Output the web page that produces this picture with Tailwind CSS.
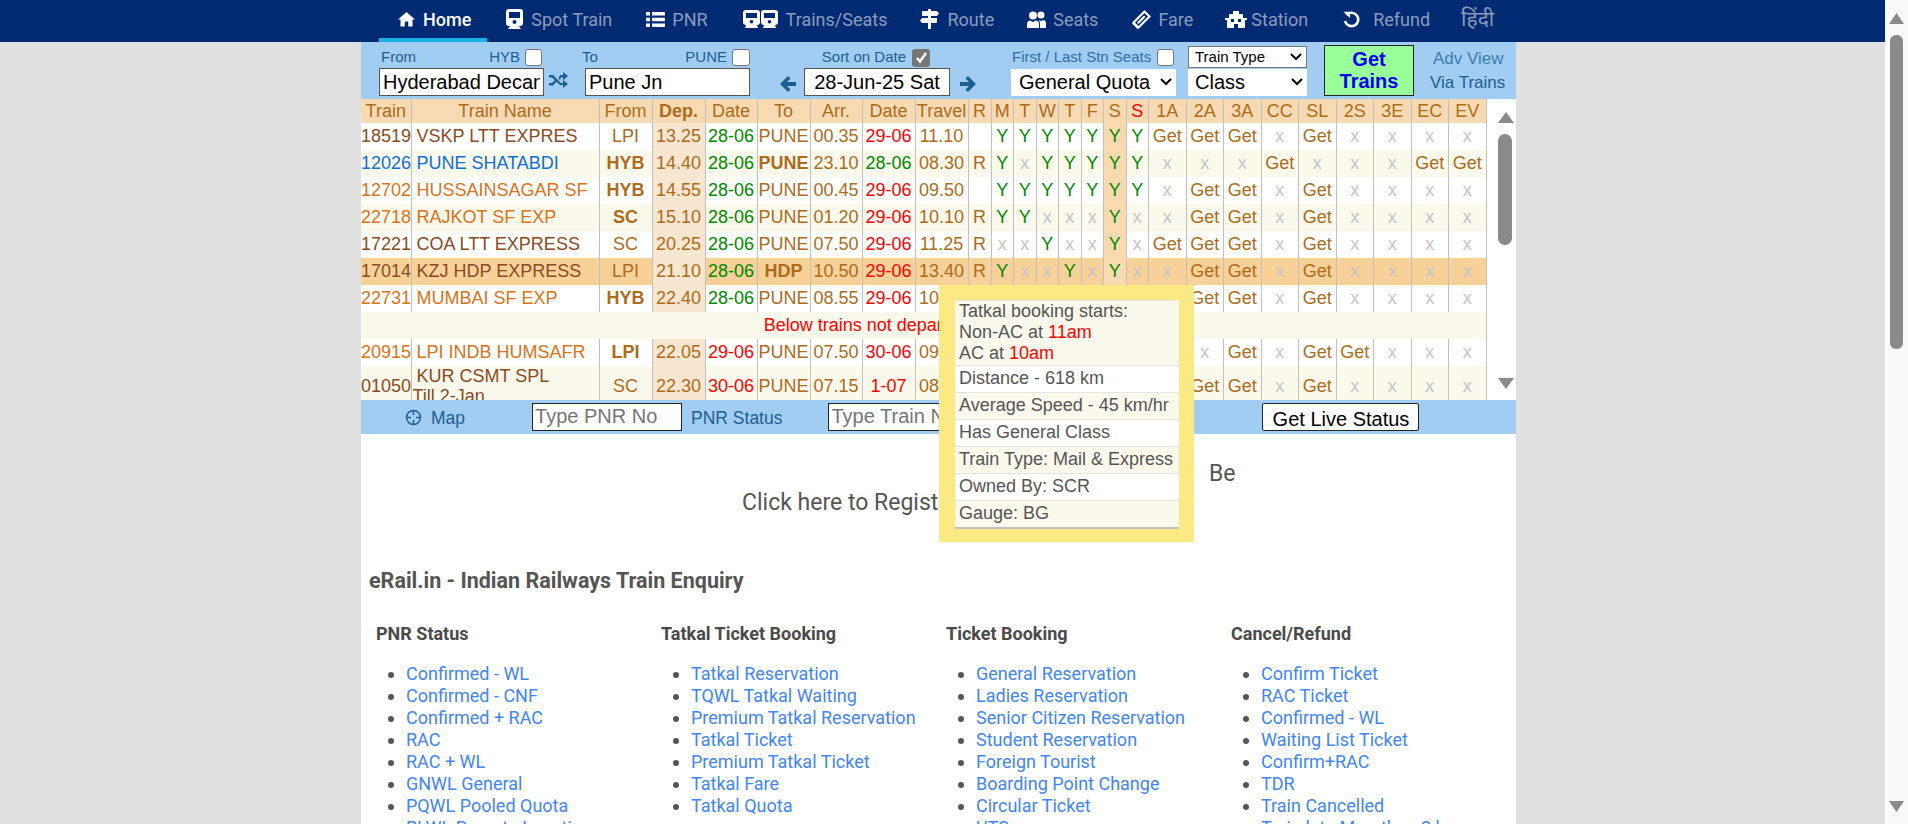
<!DOCTYPE html>
<html lang="en">
<head>
    <meta charset="UTF-8">
    <title>eRail.in - Indian Railways Train Enquiry</title>
    <script src="https://cdn.jsdelivr.net/npm/@tailwindcss/browser@4"></script>
</head>
<body class="h-screen overflow-hidden bg-[#e0e0e0] font-['Liberation_Sans',Arial,sans-serif]">
<div class="flex h-[824px]">
<div class="w-[1885px] shrink-0">
    <!-- Top menu -->
    <nav class="flex h-[42px] bg-[#002b73] pl-[379px] font-['Roboto',sans-serif] text-[18px] text-[#8c9bbc]">
        <a class="flex items-center gap-2 pl-[19px] pr-[16px] text-white border-b-4 border-[#1cb0e8] font-medium">
            <svg class="w-[17px] h-[16px]" viewBox="0 0 17 16" fill="#fff"><path d="M8.5 1 L17 8.5 H14.5 V15.5 H10.2 V10.5 H6.8 V15.5 H2.5 V8.5 H0 Z"/></svg>
            Home</a>
        <a class="flex items-center gap-2 pl-[19px] pr-[16px] pb-1">
            <svg class="w-[17px] h-[20px]" viewBox="0 0 17 20" fill="#fff"><path fill-rule="evenodd" d="M3 0 H14 Q17 0 17 3 V14 Q17 17 14 17 H13 L15 20 H2 L4 17 H3 Q0 17 0 14 V3 Q0 0 3 0 Z M3 3 V9 H14 V3 Z M8.5 11 A2 2 0 1 0 8.5 15 A2 2 0 1 0 8.5 11 Z"/></svg>
            Spot Train</a>
        <a class="flex items-center gap-[7px] pl-[18px] pr-[16px] pb-1">
            <svg class="w-[19px] h-[15px]" viewBox="0 0 19 15" fill="#fff"><path d="M0 0 H4 V3.4 H0 Z M6 0 H19 V3.4 H6 Z M0 5.8 H4 V9.2 H0 Z M6 5.8 H19 V9.2 H6 Z M0 11.6 H4 V15 H0 Z M6 11.6 H19 V15 H6 Z"/></svg>
            PNR</a>
        <a class="flex items-center gap-2 pl-[19px] pr-[16px] pb-1">
            <svg class="w-[35px] h-[18px]" viewBox="0 0 35 18" fill="#fff"><path fill-rule="evenodd" d="M3 0 H14 Q17 0 17 3 V12 Q17 15 14 15 L15 18 H2 L3 15 Q0 15 0 12 V3 Q0 0 3 0 Z M3 3 V8 H14 V3 Z M8.5 10 A1.8 1.8 0 1 0 8.5 13.6 A1.8 1.8 0 1 0 8.5 10 Z"/><path fill-rule="evenodd" d="M21 0 H32 Q35 0 35 3 V12 Q35 15 32 15 L33 18 H20 L21 15 Q18 15 18 12 V3 Q18 0 21 0 Z M21 3 V8 H32 V3 Z M26.5 10 A1.8 1.8 0 1 0 26.5 13.6 A1.8 1.8 0 1 0 26.5 10 Z"/></svg>
            Trains/Seats</a>
        <a class="flex items-center gap-2 pl-[17px] pr-[16px] pb-1">
            <svg class="w-[19px] h-[20px]" viewBox="0 0 19 20" fill="#fff"><path d="M8 0 H11 V2 H17 L19 4.5 L17 7 H11 V9 H17 V14 H11 V20 H8 V14 H2 L0 11.5 L2 9 H8 V7 H2 V2 H8 Z"/></svg>
            Route</a>
        <a class="flex items-center gap-[7px] pl-[17px] pr-[17px] pb-1">
            <svg class="w-[19px] h-[17px]" viewBox="0 0 19 17" fill="#fff"><circle cx="6" cy="4.5" r="4"/><path d="M0 17 V13 Q0 10 3 9.5 L6 11 L9 9.5 Q12 10 12 13 V17 Z"/><circle cx="14" cy="4" r="3.5"/><path d="M13 17 V12.5 Q13 10.5 11.5 9 L14 10 L16.5 9 Q19 9.5 19 12.5 V17 Z"/></svg>
            Seats</a>
        <a class="flex items-center gap-[7px] pl-[17px] pr-[16px] pb-1">
            <svg class="w-[19px] h-[19px]" viewBox="0 0 19 19" fill="#fff"><path fill-rule="evenodd" d="M12.5 0 L19 6.5 L17.5 8 L7 18.5 Q6 19 5 18.5 L0.5 14 Q0 13 0.5 12 Z M12.5 3 L3 12.5 L6.5 16 L16 6.5 Z M12 5.5 L13.5 7 L6.5 14 L5 12.5 Z"/></svg>
            Fare</a>
        <a class="flex items-center gap-1 pl-[16px] pr-[17px] pb-1">
            <svg class="w-[22px] h-[17px]" viewBox="0 0 22 17" fill="#fff"><path fill-rule="evenodd" d="M8 0 H14 V3 H18 V7 H22 V9 H20 V17 H2 V9 H0 V7 H4 V3 H8 Z M6 8 V11 H9 V8 Z M13 8 V11 H16 V8 Z M9 13 V17 H13 V13 Z"/></svg>
            Station</a>
        <a class="flex items-center gap-[13px] pl-[18px] pr-[31px] pb-1">
            <svg class="w-[17px] h-[17px]" viewBox="0 0 17 17" fill="none" stroke="#fff" stroke-width="2.6"><path d="M3.5 4 A6.7 6.7 0 1 1 2 10"/><path d="M0.5 0.8 H7 V7 Z" fill="#fff" stroke="none"/></svg>
            Refund</a>
        <a class="flex items-center pb-1 text-[21px] font-['Noto_Sans','DejaVu_Sans',sans-serif]">हिंदी</a>
    </nav>

    <main class="ml-[361px] w-[1155px] h-[782px] bg-white overflow-hidden relative">
        <!-- Search form -->
        <div class="flex h-[57px] bg-[#a2cdf2] text-[15px] text-[#1c6091] pt-[7px]">
            <div class="ml-[18px] w-[165px]">
                <div class="flex items-center justify-between h-[19px] pr-[2px] pb-[2px]"><span class="ml-[2px]">From</span><span class="flex items-center gap-[5px]">HYB <input type="checkbox" class="appearance-none w-[17px] h-[17px] bg-white rounded-[3px] border border-[#777]"></span></div>
                <input value="Hyderabad Decan" class="w-[165px] h-[28px] bg-white border border-[#555] px-[3px] pb-[1px] text-[20px] text-black outline-none">
            </div>
            <svg class="w-[19px] h-[16px] ml-[5px] mt-[23px]" viewBox="0 0 19 16" fill="#1c6091"><path d="M0 3 H4 L12 11 H14 V8 L19 12 L14 16 V13 H11 L3 5.4 H0 Z M0 11 H3 L6 8 L7.5 9.7 L4 13.4 H0 Z M9.5 6.5 L11 8 L12 5.4 H14 V8.4 L19 4 L14 0 V3 H11 Z"/></svg>
            <div class="ml-[14px] w-[168px]">
                <div class="flex items-center justify-between h-[19px] pb-[2px]"><span>To</span><span class="flex items-center gap-[5px]">PUNE <input type="checkbox" class="appearance-none w-[18px] h-[17px] bg-white rounded-[3px] border border-[#777]"></span></div>
                <input value="Pune Jn" class="ml-[3px] w-[165px] h-[28px] bg-white border border-[#555] px-[3px] pb-[1px] text-[20px] text-black outline-none">
            </div>
            <svg class="w-[16px] h-[16px] ml-[30px] mt-[27px]" viewBox="0 0 16 16" fill="#1c6091"><path d="M8 0 L10.5 2.5 L7 6 H16 V10 H7 L10.5 13.5 L8 16 L0 8 Z"/></svg>
            <div class="ml-[8px] w-[146px]">
                <div class="flex items-center justify-end gap-[6px] h-[19px] pr-[20px] pb-[2px]">Sort on Date <span class="flex items-center justify-center w-[18px] h-[18px] rounded-[3px] bg-[#767676]"><svg class="w-[13px] h-[13px]" viewBox="0 0 13 13" fill="none" stroke="#fff" stroke-width="2.4"><path d="M2 7 L5 10.5 L11 2"/></svg></span></div>
                <input value="28-Jun-25 Sat" class="w-[146px] h-[28px] bg-white border border-[#555] pb-[1px] text-center text-[20px] text-black outline-none">
            </div>
            <svg class="w-[16px] h-[16px] ml-[10px] mt-[27px]" viewBox="0 0 16 16" fill="#1c6091"><path d="M8 0 L5.5 2.5 L9 6 H0 V10 H9 L5.5 13.5 L8 16 L16 8 Z"/></svg>
            <div class="ml-[35px] w-[165px]">
                <div class="flex items-center justify-between h-[19px] pl-[1px] pr-[2px] pb-[2px] text-[#2d70a6]">First / Last Stn Seats <input type="checkbox" class="appearance-none w-[17px] h-[17px] bg-white rounded-[3px] border border-[#777]"></div>
                <div class="flex items-center justify-between w-[165px] h-[27px] mt-[1px] bg-white pl-[8px] pr-[4px] pb-[1px] text-[20px] text-black">General Quota <svg class="w-[12px] h-[8px]" viewBox="0 0 12 8" fill="none" stroke="#000" stroke-width="2"><path d="M1 1 L6 6 L11 1"/></svg></div>
            </div>
            <div class="ml-[12px] w-[119px] -mt-[3px] text-black">
                <div class="flex items-center justify-between h-[22px] bg-white border border-[#777] pl-[6px] pr-[4px] text-[15px]">Train Type <svg class="w-[12px] h-[8px]" viewBox="0 0 12 8" fill="none" stroke="#000" stroke-width="2"><path d="M1 1 L6 6 L11 1"/></svg></div>
                <div class="flex items-center justify-between h-[27px] mt-[1px] bg-white pl-[7px] pr-[4px] pb-[1px] text-[20px]">Class <svg class="w-[12px] h-[8px]" viewBox="0 0 12 8" fill="none" stroke="#000" stroke-width="2"><path d="M1 1 L6 6 L11 1"/></svg></div>
            </div>
            <button class="ml-[17px] -mt-[4px] w-[90px] h-[51px] bg-[#99ff99] border border-[#222] pb-[2px] text-[20px] leading-[22px] font-bold text-[#0000ee]">Get<br>Trains</button>
            <div class="ml-[16px] -mt-[2px] text-[17px] leading-[24px] whitespace-nowrap"><div class="ml-[3px] text-[#3b7cae]">Adv View</div><div>Via Trains</div></div>
        </div>

        <!-- Train list -->
        <div class="flex h-[301px] overflow-hidden">
            <table class="w-[1125px] h-fit table-fixed border-collapse text-[18px] leading-[21px] text-center text-[#ac6c1c] shrink-0 [&_td]:border-r [&_td]:border-[#c0c0c0] [&_td]:py-0 [&_td]:whitespace-nowrap [&_td]:overflow-hidden">
                <colgroup>
                    <col class="w-[50px]"><col class="w-[188px]"><col class="w-[53px]"><col class="w-[53px]"><col class="w-[52px]"><col class="w-[53px]"><col class="w-[52px]"><col class="w-[53px]"><col class="w-[53px]"><col class="w-[23px]">
                    <col class="w-[22.5px]"><col class="w-[22.5px]"><col class="w-[22.5px]"><col class="w-[22.5px]"><col class="w-[22.5px]"><col class="w-[22.5px]"><col class="w-[22.5px]">
                    <col class="w-[37.5px]"><col class="w-[37.5px]"><col class="w-[37.5px]"><col class="w-[37.5px]"><col class="w-[37.5px]"><col class="w-[37.5px]"><col class="w-[37.5px]"><col class="w-[37.5px]"><col class="w-[37.5px]">
                </colgroup>
                <tbody id="rows"></tbody>
            </table>
            <div class="relative flex-1">
                <svg class="absolute left-[11px] top-[13px] w-[16px] h-[11px]" viewBox="0 0 16 11" fill="#8a8a8a"><path d="M8 0 L16 11 H0 Z"/></svg>
                <div class="absolute left-[11px] top-[35px] w-[14px] h-[111px] rounded-[7px] bg-[#8a8a8a]"></div>
                <svg class="absolute left-[11px] top-[279px] w-[16px] h-[11px]" viewBox="0 0 16 11" fill="#8a8a8a"><path d="M0 0 H16 L8 11 Z"/></svg>
            </div>
        </div>

        <!-- Map / PNR / live status bar -->
        <div class="flex items-center h-[34px] bg-[#a2cdf2] text-[#1c6091]">
            <svg class="ml-[44px] w-[17px] h-[17px]" viewBox="0 0 17 17" fill="none" stroke="#1c6091" stroke-width="1.5"><circle cx="8.5" cy="8.5" r="7"/><path d="M8.5 1 V6 M8.5 11 V16 M1 8.5 H6 M11 8.5 H16"/></svg>
            <span class="ml-[9px] mt-[3px] text-[17.5px]">Map</span>
            <input placeholder="Type PNR No" class="ml-[67px] w-[150px] h-[28px] bg-white border border-[#222] px-[2px] pb-[3px] text-[20px] outline-none placeholder:text-[#757575]">
            <span class="ml-[9px] mt-[3px] text-[17.5px]">PNR Status</span>
            <input placeholder="Type Train No" class="ml-[46px] w-[150px] h-[28px] bg-white border border-[#222] px-[2px] pb-[3px] text-[20px] outline-none placeholder:text-[#757575]">
            <button class="ml-[284px] w-[157px] h-[28px] bg-white border border-[#222] rounded-[2px] pb-[4px] text-[20px] text-black">Get Live Status</button>
        </div>

        <!-- Content -->
        <div class="font-['Roboto',sans-serif] text-[#555]">
            <div class="flex h-[120px] text-[23px]">
                <a class="ml-[381px] w-[467px] mt-[52px] whitespace-nowrap">Click here to Register</a>
                <span class="mt-[23px]">Be</span>
            </div>
            <h1 class="ml-[8px] mt-[14px] text-[21.5px] leading-[26px] font-bold text-[#555]">eRail.in - Indian Railways Train Enquiry</h1>
            <div class="grid grid-cols-[285px_285px_285px_285px] ml-[15px] mt-[30px]" id="links"></div>
        </div>

        <!-- Hover card over the list -->
        <div class="absolute left-[578px] top-[243px] w-[255px] h-[257px] bg-[#fbe983] pl-[16px] pt-[15px]">
            <div class="w-[224px] text-[18px] leading-[21px] text-[#555] border-b-2 border-[#c0c0c0] [&>div]:px-[4px] [&>div]:border-t [&>div]:border-[#e4e4e4]">
                <div class="bg-[#fbf8ec] h-[65px]">Tatkal booking starts:<br>Non-AC at <span class="text-[#ff0000]">11am</span><br>AC at <span class="text-[#ff0000]">10am</span></div>
                <div class="bg-white h-[27px] pt-[2px]">Distance - 618 km</div>
                <div class="bg-[#fbf8ec] h-[27px] pt-[2px]">Average Speed - 45 km/hr</div>
                <div class="bg-white h-[27px] pt-[2px]">Has General Class</div>
                <div class="bg-[#fbf8ec] h-[27px] pt-[2px] whitespace-nowrap">Train Type: Mail &amp; Express</div>
                <div class="bg-white h-[27px] pt-[2px]">Owned By: SCR</div>
                <div class="bg-[#fbf8ec] h-[27px] pt-[2px]">Gauge: BG</div>
            </div>
        </div>
    </main>
</div>

<!-- Page scrollbar -->
<div class="relative w-[23px] bg-[#fafafa]">
    <svg class="absolute left-[4px] top-[13px] w-[15px] h-[11px]" viewBox="0 0 15 11" fill="#8a8a8a"><path d="M7.5 0 L15 11 H0 Z"/></svg>
    <div class="absolute left-[5px] top-[35px] w-[13px] h-[314px] rounded-[6px] bg-[#8a8a8a]"></div>
    <svg class="absolute left-[4px] top-[801px] w-[15px] h-[11px]" viewBox="0 0 15 11" fill="#8a8a8a"><path d="M0 0 H15 L7.5 11 Z"/></svg>
</div>
</div>

<script>
    const days = ['M', 'T', 'W', 'T', 'F', 'S', 'S'];
    const classes = ['1A', '2A', '3A', 'CC', 'SL', '2S', '3E', 'EC', 'EV'];
    const BROWN = 'text-[#8a4b22]', BLUE = 'text-[#0f6fd8]', ORANGE = 'text-[#d9731a]';
    const GREEN = 'text-[#008800]', RED = 'text-[#ff0000]';

    // no, name, from, dep, depDate, to, arr, arrDate, travel, R, days, classes
    const trains = [
        ['18519', 'VSKP LTT EXPRES', 'LPI', '13.25', '28-06', 'PUNE', '00.35', '29-06', '11.10', '', 'YYYYYYY', 'GGGxGxxxx', BROWN],
        ['12026', 'PUNE SHATABDI', '*HYB', '14.40', '28-06', '*PUNE', '23.10', '28-06', '08.30', 'R', 'YxYYYYY', 'xxxGxxxGG', BLUE],
        ['12702', 'HUSSAINSAGAR SF', '*HYB', '14.55', '28-06', 'PUNE', '00.45', '29-06', '09.50', '', 'YYYYYYY', 'xGGxGxxxx', ORANGE],
        ['22718', 'RAJKOT SF EXP', '*SC', '15.10', '28-06', 'PUNE', '01.20', '29-06', '10.10', 'R', 'YYxxxYx', 'xGGxGxxxx', ORANGE],
        ['17221', 'COA LTT EXPRESS', 'SC', '20.25', '28-06', 'PUNE', '07.50', '29-06', '11.25', 'R', 'xxYxxYx', 'GGGxGxxxx', BROWN],
        ['17014', 'KZJ HDP EXPRESS', 'LPI', '21.10', '28-06', '*HDP', '10.50', '29-06', '13.40', 'R', 'YxxYxYx', 'xGGxGxxxx', BROWN],
        ['22731', 'MUMBAI SF EXP', '*HYB', '22.40', '28-06', 'PUNE', '08.55', '29-06', '10.45', 'R', 'YYYYYYY', 'xGGxGxxxx', ORANGE],
        'below',
        ['20915', 'LPI INDB HUMSAFR', '*LPI', '22.05', '29-06', 'PUNE', '07.50', '30-06', '09.45', 'R', 'xxxxxYx', 'xxGxGGxxx', ORANGE],
        ['01050', 'KUR CSMT SPL', 'SC', '22.30', '30-06', 'PUNE', '07.15', '1-07', '08.45', 'R', 'xxxxxYx', 'xGGxGxxxx', BROWN],
    ];

    const cell = (text, cls = '') => `<td class="px-0 ${cls}">${text}</td>`;
    const bold = v => v[0] === '*' ? `<b>${v.slice(1)}</b>` : v;
    const dateCls = d => (d === '28-06' ? GREEN : RED);

    let html = '<tr class="bg-[#f8dab2] h-[24px]">' +
        ['Train', 'Train Name', 'From', '<b>Dep.</b>', 'Date', 'To', 'Arr.', 'Date', 'Travel', 'R'].map(h => cell(h)).join('') +
        days.map((d, i) => cell(d, (i === 5 ? 'bg-[#f8d9b0]' : '') + (i === 6 ? RED : ''))).join('') +
        classes.map(c => cell(c)).join('') + '</tr>';

    let odd = false;
    trains.forEach(t => {
        if (t === 'below') {
            html += `<tr class="bg-[#fbf8ec] h-[27px]"><td colspan="26" class="text-[#ff0000]">Below trains not departing on 28-Jun-25</td></tr>`;
            odd = false;
            return;
        }
        const hl = t[0] === '17014';
        const rowBg = hl ? 'bg-[#f8d199]' : (odd ? 'bg-[#fbf8ec]' : 'bg-white');
        odd = !odd;
        const last = t[0] === '01050';
        const name = last
            ? `<div class="leading-[20px]">${t[1]}<br><span class="-ml-[4px]">Till 2-Jan</span></div>`
            : t[1];
        html += `<tr class="${rowBg} ${last ? 'h-[40px]' : 'h-[27px]'}">` +
            cell(t[0], t[12]) +
            `<td class="pl-[5px] text-left ${t[12]}">${name}</td>` +
            cell(bold(t[2])) +
            cell(t[3], 'bg-[#f8e6d0]') +
            cell(t[4], dateCls(t[4])) +
            cell(bold(t[5])) +
            cell(t[6]) +
            cell(t[7], t[0] === '12026' ? GREEN : RED) +
            cell(t[8]) +
            cell(t[9]) +
            [...t[10]].map((v, i) => cell(v, (i === 5 ? 'bg-[#f8d9b0] ' : '') + (v === 'Y' ? GREEN : 'text-[#c4c4c4]'))).join('') +
            [...t[11]].map(v => v === 'G' ? cell('Get') : cell('x', 'text-[#c4c4c4]')).join('') +
            '</tr>';
    });
    document.getElementById('rows').innerHTML = html;

    const sections = [
        ['PNR Status', ['Confirmed - WL', 'Confirmed - CNF', 'Confirmed + RAC', 'RAC', 'RAC + WL', 'GNWL General', 'PQWL Pooled Quota', 'RLWL Remote Location']],
        ['Tatkal Ticket Booking', ['Tatkal Reservation', 'TQWL Tatkal Waiting', 'Premium Tatkal Reservation', 'Tatkal Ticket', 'Premium Tatkal Ticket', 'Tatkal Fare', 'Tatkal Quota']],
        ['Ticket Booking', ['General Reservation', 'Ladies Reservation', 'Senior Citizen Reservation', 'Student Reservation', 'Foreign Tourist', 'Boarding Point Change', 'Circular Ticket', 'UTS']],
        ['Cancel/Refund', ['Confirm Ticket', 'RAC Ticket', 'Confirmed - WL', 'Waiting List Ticket', 'Confirm+RAC', 'TDR', 'Train Cancelled', 'Train late Morethan 2 hrs']],
    ];
    document.getElementById('links').innerHTML = sections.map(([title, items]) =>
        `<div><h2 class="text-[18px] leading-[20px] font-bold text-[#4a4a4a]">${title}</h2>
        <ul class="mt-[19px] list-disc pl-[30px] text-[18px] leading-[22px] marker:text-[#555]">
        ${items.map(i => `<li><a class="text-[#4285f4]">${i}</a></li>`).join('')}</ul></div>`).join('');
</script>
</body>
</html>
